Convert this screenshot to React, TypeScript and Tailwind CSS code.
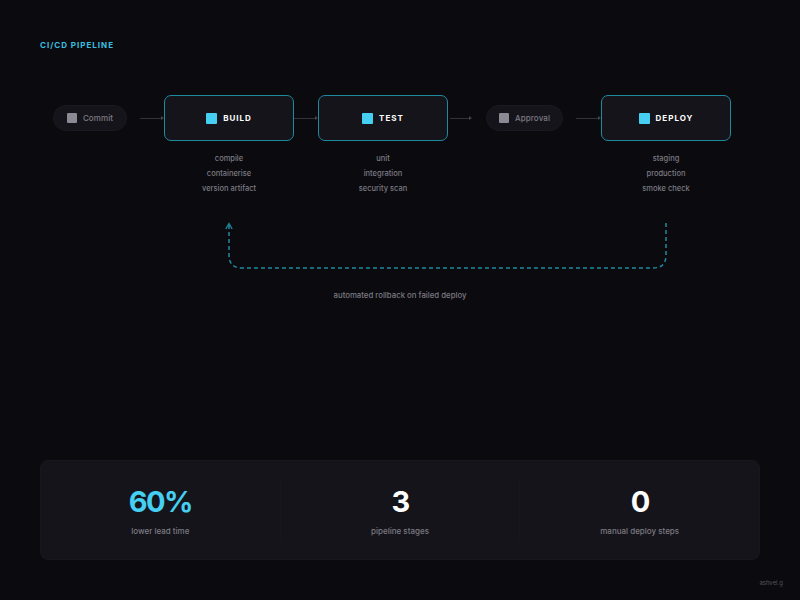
const font = { fontFamily: "Inter, sans-serif" };

function Arrow({ width }: { width: string }) {
  return (
    <div className={`mt-[23px] flex h-0 items-center ${width}`}>
      <div className="h-px flex-1 bg-[#33323a]" />
      <div className="h-0 w-0 border-y-[2px] border-l-[3px] border-y-transparent border-l-[#44434b]" />
    </div>
  );
}

function Pill({ label, width }: { label: string; width: string }) {
  return (
    <div
      className={`mt-[10px] flex h-[26px] items-center justify-center gap-[6px] rounded-full border border-[#1a1920] bg-[#15141a] ${width}`}
    >
      <span className="h-[10px] w-[10px] rounded-[1px] bg-[#8b8a94]" />
      <span className="text-[8px] font-medium tracking-[0.1px] text-[#7c7b84]">{label}</span>
    </div>
  );
}

function Stage({ label, items }: { label: string; items: string[] }) {
  return (
    <div className="flex w-[130px] flex-col items-center">
      <div className="flex h-[46px] w-full items-center justify-center gap-[6px] rounded-[7px] border-[1.5px] border-[#1f8a9f] bg-[#15141a]">
        <span className="h-[11px] w-[11px] rounded-[1px] bg-[#45cff2]" />
        <span className="text-[8px] font-bold tracking-[1px] text-white">{label}</span>
      </div>
      <ul className="mt-[10px] flex flex-col items-center">
        {items.map((item) => (
          <li key={item} className="h-[15px] text-[7.5px] leading-[15px] font-medium text-[#7c7b84]">
            {item}
          </li>
        ))}
      </ul>
    </div>
  );
}

function Stat({ value, label, accent }: { value: string; label: string; accent?: boolean }) {
  return (
    <div className="flex h-[60px] flex-1 flex-col items-center justify-center border-r border-[#18171e] last:border-r-0">
      <div className={`text-[29px] leading-[36px] font-bold tracking-[-1.5px] ${accent ? "text-[#45cff2]" : "text-white"}`}>
        {value}
      </div>
      <div className="mt-[5px] text-[8px] leading-[12px] font-medium text-[#7c7b84]">{label}</div>
    </div>
  );
}

export default function App() {
  return (
    <div className="flex h-[600px] w-[800px] flex-col overflow-hidden bg-[#0b0a0e] px-[40px]" style={font}>
      <h1 className="mt-[39px] text-[8px] leading-[12px] font-bold tracking-[1px] text-[#3bbfe0]">
        CI/CD PIPELINE
      </h1>

      {/* Pipeline */}
      <div className="mt-[44px] ml-[13px] flex items-start">
        <Pill label="Commit" width="w-[74px]" />
        <div className="ml-[13px]">
          <Arrow width="w-[24px]" />
        </div>
        <Stage label="BUILD" items={["compile", "containerise", "version artifact"]} />
        <Arrow width="w-[24px]" />
        <Stage label="TEST" items={["unit", "integration", "security scan"]} />
        <div className="ml-[2px] mr-[14px]">
          <Arrow width="w-[22px]" />
        </div>
        <Pill label="Approval" width="w-[77px]" />
        <div className="ml-[13px]">
          <Arrow width="w-[25px]" />
        </div>
        <Stage label="DEPLOY" items={["staging", "production", "smoke check"]} />
      </div>

      {/* Rollback path */}
      <svg className="mt-[25px] ml-[185px] block" width="445" height="50" viewBox="0 0 445 50" fill="none">
        <path
          d="M441 2V34Q441 47 428 47H17Q4 47 4 34V4"
          stroke="#1f8a9f"
          strokeWidth="1.5"
          strokeDasharray="4 3"
        />
        <path d="M0.8 8L4 2.5L7.2 8" stroke="#1f8a9f" strokeWidth="1.3" />
      </svg>
      <p className="mt-[18px] text-center text-[7.8px] leading-[12px] font-medium text-[#7c7b84]">
        automated rollback on failed deploy
      </p>

      {/* Stats */}
      <div className="mt-[159px] flex h-[100px] items-center rounded-[8px] border border-[#18171e] bg-[#15141a]">
        <Stat value="60%" label="lower lead time" accent />
        <Stat value="3" label="pipeline stages" />
        <Stat value="0" label="manual deploy steps" />
      </div>

      <div className="mt-[18px] -mr-[23px] text-right text-[6px] leading-[10px] text-[#55545c]">ashvel.g</div>
    </div>
  );
}
